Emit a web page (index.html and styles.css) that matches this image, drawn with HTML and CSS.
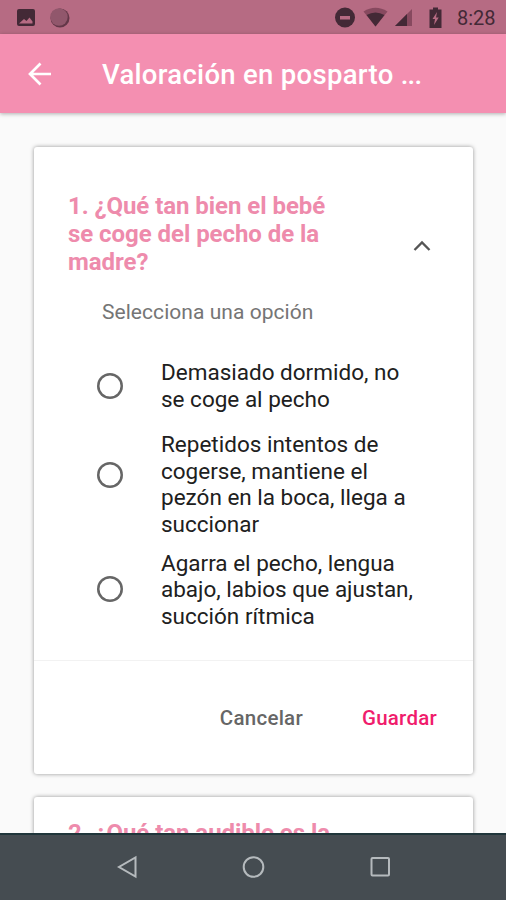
FILE: index.html
```html
<!DOCTYPE html>
<html lang="es">
<head>
<meta charset="utf-8">
<title>Valoración en posparto</title>
<link rel="stylesheet" href="styles.css">
</head>
<body>
<div class="screen">
  <div class="status-bar">
    <svg class="status-icons" width="76" height="34" viewBox="0 0 76 34">
      <path fill="#432936" fill-rule="evenodd" d="M19 9h14a2 2 0 0 1 2 2v13a2 2 0 0 1-2 2H19a2 2 0 0 1-2-2V11a2 2 0 0 1 2-2zM19 23.500h13.500v-2l-3-4-3 3.500-2.500-2z"/>
      <circle cx="60" cy="18" r="9.500" fill="#633748"/>
      <circle cx="59" cy="17" r="8.700" fill="#91576c"/>
    </svg>
    <svg class="status-icons" width="120" height="34" viewBox="330 0 120 34">
      <circle cx="345" cy="17.500" r="10" fill="#432936"/>
      <path fill="#b66b83" d="M340 16h10v3.500h-10z"/>
      <path fill="#87495f" d="M363.500 11.500q12-7.500 24 0L375.500 26.500z"/>
      <path fill="#432936" d="M366.500 15q9-5 18 0L375.500 26.500z"/>
      <path fill="#87495f" d="M412 9v17h-17z"/>
      <path fill="#432936" d="M407 14v12h-12z"/>
      <path fill="#432936" fill-rule="evenodd" d="M433 7.500h5V9.500h3.500V28h-12V9.500h3.500zM437 12l-4.500 7h2.500l-1 6 4.700-7.500H436z"/>
    </svg>
    <span class="clock">8:28</span>
  </div>
  <header class="app-bar">
    <svg class="back" width="24" height="24" viewBox="0 0 24 24"><path d="M23 12H2M12.500 1.500L2 12l10.500 10.500"/></svg>
    <h1 class="title">Valoración en posparto <span class="dots">...</span></h1>
  </header>
  <main class="content">
    <section class="card">
      <div class="question">
        <h2 class="question-text">1. ¿Qué tan bien el bebé<br>se coge del pecho de la<br>madre?</h2>
        <svg class="chevron" width="18" height="12" viewBox="0 0 18 12"><path d="M1.500 10L9 2.500l7.500 7.500"/></svg>
      </div>
      <p class="hint">Selecciona una opción</p>
      <div class="options">
        <div class="option"><span class="radio"></span><span class="label">Demasiado dormido, no<br>se coge al pecho</span></div>
        <div class="option option-tall"><span class="radio"></span><span class="label">Repetidos intentos de<br>cogerse, mantiene el<br>pezón en la boca, llega a<br>succionar</span></div>
        <div class="option"><span class="radio"></span><span class="label">Agarra el pecho, lengua<br>abajo, labios que ajustan,<br>succión rítmica</span></div>
      </div>
      <div class="actions"><span class="cancel">Cancelar</span><span class="save">Guardar</span></div>
    </section>
    <section class="card card-next">
      <h2 class="question-text">2. ¿Qué tan audible es la</h2>
    </section>
  </main>
  <nav class="nav-bar">
    <svg width="22" height="24" viewBox="0 0 22 24"><path d="M18.500 2.500v19L2 12z"/></svg>
    <svg width="24" height="24" viewBox="0 0 24 24"><circle cx="11.500" cy="12" r="9.800"/></svg>
    <svg width="22" height="22" viewBox="0 0 22 22"><rect x="2.500" y="2" width="17.500" height="17.500" rx="1"/></svg>
  </nav>
</div>
</body>
</html>
```
FILE: styles.css
```css
* { box-sizing: border-box; }
body { margin: 0; font-family: Roboto, sans-serif; }
h1, h2, p { margin: 0; }
svg { display: block; flex: none; }
.screen { width: 506px; height: 900px; display: flex; flex-direction: column; overflow: hidden; background: #fafafa; white-space: nowrap; }
.status-bar { height: 34px; flex: none; display: flex; background: #b66b83; }
.status-icons:first-child { margin-right: 254px; }
.clock { margin-left: 7px; font-size: 20px; line-height: 37px; color: #432936; }
.app-bar { height: 79px; flex: none; display: flex; align-items: center; padding-left: 28px; background: #f48fb1; box-shadow: 0 1px 4px rgba(0,0,0,.3); z-index: 1; }
.back { fill: none; stroke: #fff; stroke-width: 2.700; }
.title { margin: 2px 0 0 50px; font-size: 27.500px; font-weight: 500; line-height: 32px; letter-spacing: .3px; color: #fff; }
.dots { letter-spacing: -.7px; }
.content { flex: 1; min-height: 0; overflow: hidden; padding: 34px 33px 0 34px; }
.card { height: 627px; background: #fff; border-radius: 3px; box-shadow: 0 0 4px rgba(0,0,0,.4); }
.question { display: flex; padding: 45px 42px 0 34px; justify-content: space-between; }
.question-text { font-size: 24px; line-height: 28px; font-weight: 700; letter-spacing: -.05px; color: #ee8bac; }
.chevron { margin-top: 48px; fill: none; stroke: #555; stroke-width: 2.300; }
.hint { margin: 23px 0 0 68px; font-size: 21px; line-height: 26px; letter-spacing: .05px; color: #757575; }
.options { height: 336px; padding-top: 34px; border-bottom: 1px solid #f2f2f2; }
.option { display: flex; align-items: center; padding-left: 63px; }
.radio { width: 26px; height: 26px; flex: none; border-radius: 50%; box-shadow: inset 0 0 0 2.500px #666; }
.label { margin-left: 38px; font-size: 22.500px; line-height: 26.600px; color: #202020; }
.option-tall { margin: 19px 0 12px; }
.option-tall .radio { position: relative; top: -9px; }
.actions { display: flex; justify-content: flex-end; gap: 59px; padding: 43px 36px 0 0; font-size: 20.500px; line-height: 28px; letter-spacing: .25px; font-weight: 500; color: #666; }
.save { color: #f01c6c; }
.card-next { margin-top: 23px; height: 120px; padding: 22px 34px; }
.nav-bar { height: 67px; flex: none; display: flex; align-items: center; justify-content: space-between; padding: 0 115px 2px 117px; background: #454c51; border-top: 2px solid #20363b; z-index: 1; }
.nav-bar svg { fill: none; stroke: #b5babd; stroke-width: 2; }
```
